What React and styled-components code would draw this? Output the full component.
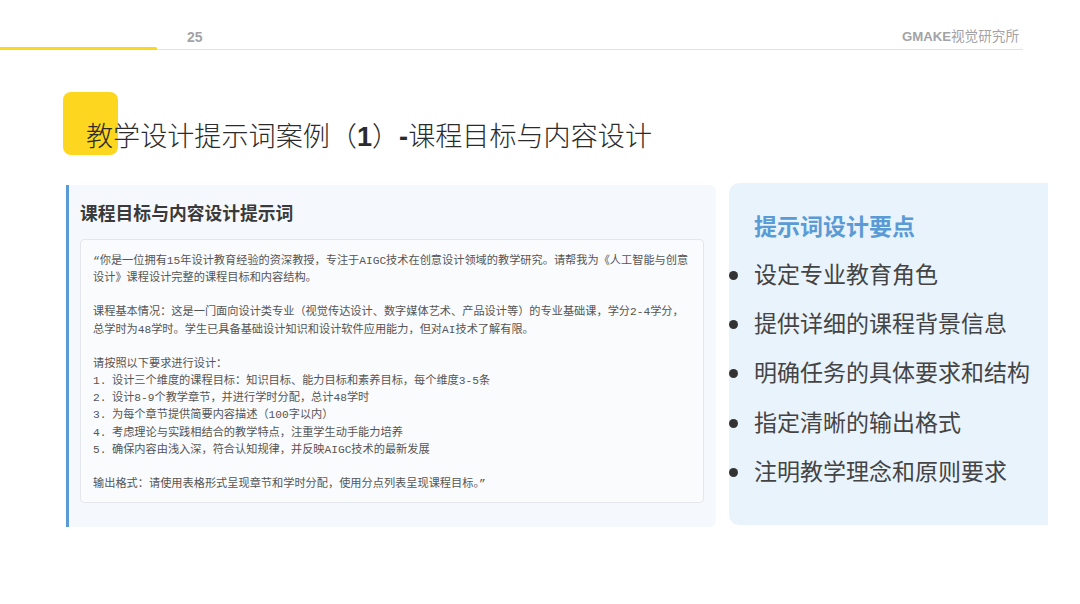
import React from "react";
import styled, { createGlobalStyle } from "styled-components";

const CJK = `"Liberation Sans", "Noto Sans CJK SC", sans-serif`;
const MONO_CJK = `"Liberation Mono", "Noto Sans CJK SC", monospace`;

const GlobalStyle = createGlobalStyle`
  html, body {
    margin: 0;
    padding: 0;
    background: #fff;
    overflow: hidden;
  }
  * { box-sizing: border-box; }
`;

const Page = styled.div`
  width: 1080px;
  height: 604px;
  font-family: ${CJK};
  display: flex;
  flex-direction: column;
`;

const Header = styled.header`
  width: 1023px;
  height: 50px;
  display: flex;
  align-items: flex-end;
  justify-content: space-between;
  border-bottom: 1px solid #e2e2e4;
  position: relative;
  padding: 0 4px 3px 187px;
`;

const ProgressBar = styled.div`
  position: absolute;
  left: 0;
  bottom: -1px;
  width: 157px;
  height: 3px;
  background: #fdd71f;
  border-radius: 0 2px 2px 0;
`;

const PageNumber = styled.span`
  font-size: 14px;
  line-height: 18px;
  font-weight: 700;
  color: #a3a3a7;
`;

const Brand = styled.span`
  font-size: 13.2px;
  line-height: 18px;
  font-weight: 700;
  color: #a3a3a7;
  & > small {
    font-size: 13.6px;
    font-weight: 400;
  }
`;

const TitleRow = styled.div`
  position: relative;
  margin: 69px 0 0 86px;
  height: 36px;
`;

const TitleBlock = styled.div`
  position: absolute;
  left: -23px;
  top: -27px;
  width: 55px;
  height: 63px;
  background: #fdd71f;
  border-radius: 8px;
`;

const Title = styled.h1`
  position: relative;
  margin: 0;
  font-size: 27.1px;
  line-height: 36px;
  font-weight: 300;
  color: #2b2b2b;
  white-space: nowrap;
  & > b {
    font-weight: 700;
  }
`;

const Columns = styled.div`
  display: flex;
  align-items: flex-start;
  gap: 13px;
  margin: 28px 0 0 66px;
`;

const PromptCard = styled.section`
  width: 650px;
  height: 342px;
  margin-top: 2px;
  padding: 17px 12px 0 11px;
  background: #f5f9fe;
  border-left: 3px solid #5b9bd5;
  border-radius: 0 6px 6px 0;
`;

const PromptHeading = styled.h2`
  margin: 0 0 13px;
  font-size: 17.8px;
  line-height: 24px;
  font-weight: 700;
  color: #3a3a3a;
`;

const PromptBox = styled.div`
  height: 264px;
  padding: 13px 12px 0;
  background: #fafbfd;
  border: 1px solid #e3e7eb;
  border-radius: 4px;
  font-family: ${MONO_CJK};
  font-size: 11.2px;
  line-height: 17.15px;
  color: #555;
`;

const Para = styled.p`
  margin: 0 0 17.15px;
`;

const Steps = styled.ol`
  margin: 0 0 17.15px;
  padding: 0;
  list-style: none;
`;

const Step = styled.li`
  display: flex;
  gap: 5.5px;
`;

const TipsCard = styled.aside`
  width: 319px;
  height: 342px;
  padding: 29px 0 0 25px;
  background: #e9f3fc;
  border-radius: 10px 0 0 10px;
`;

const TipsHeading = styled.h2`
  margin: 0 0 9px;
  font-size: 23px;
  line-height: 30px;
  font-weight: 700;
  color: #5b9bd5;
`;

const TipsList = styled.ul`
  margin: 0;
  padding: 0;
  list-style: none;
`;

const Tip = styled.li`
  position: relative;
  font-size: 23px;
  line-height: 49.2px;
  color: #444;
  white-space: nowrap;
  &::before {
    content: "";
    position: absolute;
    left: -25px;
    top: 20px;
    width: 9px;
    height: 9px;
    border-radius: 50%;
    background: #333;
  }
`;

const steps = [
  "设计三个维度的课程目标：知识目标、能力目标和素养目标，每个维度3-5条",
  "设计8-9个教学章节，并进行学时分配，总计48学时",
  "为每个章节提供简要内容描述（100字以内）",
  "考虑理论与实践相结合的教学特点，注重学生动手能力培养",
  "确保内容由浅入深，符合认知规律，并反映AIGC技术的最新发展",
];

const tips = [
  "设定专业教育角色",
  "提供详细的课程背景信息",
  "明确任务的具体要求和结构",
  "指定清晰的输出格式",
  "注明教学理念和原则要求",
];

export default function App() {
  return (
    <Page>
      <GlobalStyle />
      <Header>
        <ProgressBar />
        <PageNumber>25</PageNumber>
        <Brand>
          GMAKE<small>视觉研究所</small>
        </Brand>
      </Header>

      <TitleRow>
        <TitleBlock />
        <Title>
          教学设计提示词案例（<b>1</b>）<b>-</b>课程目标与内容设计
        </Title>
      </TitleRow>

      <Columns>
        <PromptCard>
          <PromptHeading>课程目标与内容设计提示词</PromptHeading>
          <PromptBox>
            <Para>
              “你是一位拥有15年设计教育经验的资深教授，专注于AIGC技术在创意设计领域的教学研究。请帮我为《人工智能与创意设计》课程设计完整的课程目标和内容结构。
            </Para>
            <Para>
              课程基本情况：这是一门面向设计类专业（视觉传达设计、数字媒体艺术、产品设计等）的专业基础课，学分2-4学分，总学时为48学时。学生已具备基础设计知识和设计软件应用能力，但对AI技术了解有限。
            </Para>
            <div>请按照以下要求进行设计：</div>
            <Steps>
              {steps.map((text, i) => (
                <Step key={i}>
                  <span>{i + 1}.</span>
                  <span>{text}</span>
                </Step>
              ))}
            </Steps>
            <div>输出格式：请使用表格形式呈现章节和学时分配，使用分点列表呈现课程目标。”</div>
          </PromptBox>
        </PromptCard>

        <TipsCard>
          <TipsHeading>提示词设计要点</TipsHeading>
          <TipsList>
            {tips.map((tip) => (
              <Tip key={tip}>{tip}</Tip>
            ))}
          </TipsList>
        </TipsCard>
      </Columns>
    </Page>
  );
}
